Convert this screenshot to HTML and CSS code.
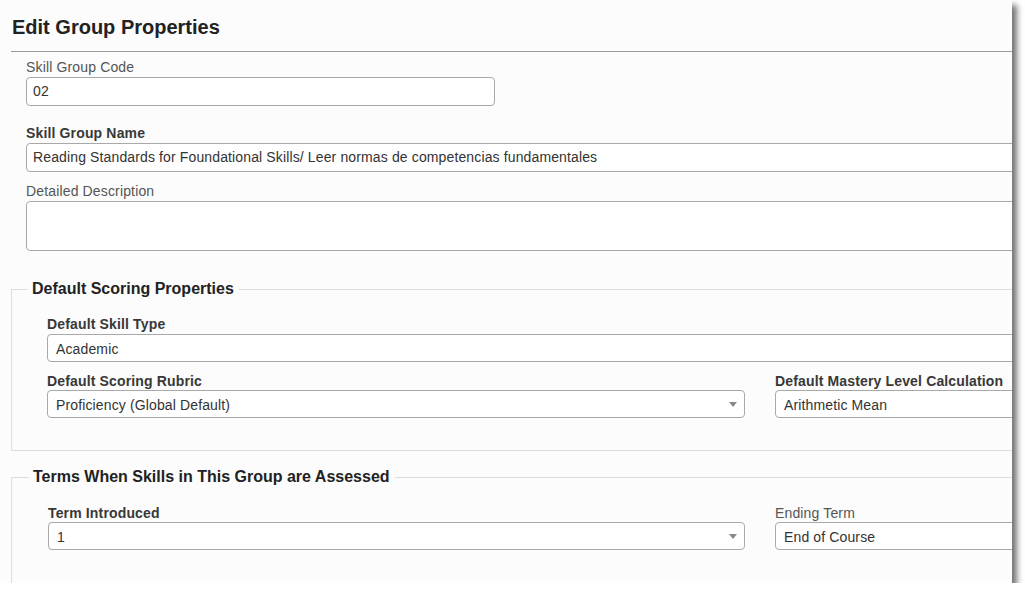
FILE: index.html
```html
<!DOCTYPE html>
<html>
<head>
<meta charset="utf-8">
<link rel="stylesheet" href="styles.css">
</head>
<body>
<div class="panel">
  <div class="sheet">
    <h1 class="title">Edit Group Properties</h1>
    <div class="rule"></div>
    <div class="top-fields">
      <div class="label first">Skill Group Code</div>
      <div class="field code">02</div>
      <div class="label bold second">Skill Group Name</div>
      <div class="field">Reading Standards for Foundational Skills/ Leer normas de competencias fundamentales</div>
      <div class="label third">Detailed Description</div>
      <div class="field area"></div>
    </div>
    <fieldset class="group scoring">
      <legend class="legend">Default Scoring Properties</legend>
      <div class="group-body">
        <div class="label bold">Default Skill Type</div>
        <div class="field in">Academic</div>
        <div class="cols">
          <div class="col">
            <div class="label bold">Default Scoring Rubric</div>
            <div class="field in select"><span>Proficiency (Global Default)</span><span class="caret"></span></div>
          </div>
          <div class="col">
            <div class="label bold">Default Mastery Level Calculation</div>
            <div class="field in">Arithmetic Mean</div>
          </div>
        </div>
      </div>
    </fieldset>
    <fieldset class="group terms">
      <legend class="legend l2">Terms When Skills in This Group are Assessed</legend>
      <div class="group-body">
        <div class="cols flush">
          <div class="col">
            <div class="label bold">Term Introduced</div>
            <div class="field in select"><span>1</span><span class="caret"></span></div>
          </div>
          <div class="col">
            <div class="label">Ending Term</div>
            <div class="field in">End of Course</div>
          </div>
        </div>
      </div>
    </fieldset>
  </div>
</div>
</body>
</html>
```
FILE: styles.css
```css
html, body {
  margin: 0;
  padding: 0;
  background: #ffffff;
}
body {
  font-family: "Liberation Sans", Arial, sans-serif;
  font-size: 14px;
  color: #333;
}
.panel {
  width: 1012px;
  height: 583px;
  overflow: hidden;
  background: #fbfcfb;
  box-shadow: 5px 5px 6px rgba(0, 0, 0, 0.55);
}
.sheet {
  width: 1600px;
}
.title {
  margin: 0;
  padding: 15px 0 0 12px;
  font-size: 20px;
  line-height: 24px;
  font-weight: bold;
  color: #222;
}
.rule {
  margin: 12px 0 0 11px;
  border-top: 1px solid #9c9c9c;
  width: 1200px;
}
.top-fields {
  padding-left: 26px;
  display: flex;
  flex-direction: column;
  align-items: flex-start;
}
.label {
  font-size: 14px;
  line-height: 20px;
  color: #555;
  letter-spacing: 0.15px;
}
.label.bold {
  font-weight: bold;
  color: #383838;
}
.label.first { margin-top: 5px; }
.label.second { margin-top: 17px; }
.label.third { margin-top: 9px; }
.field {
  box-sizing: border-box;
  height: 29px;
  width: 1400px;
  border: 1px solid #a9a9a9;
  border-radius: 4px;
  background: #fff;
  padding: 0 6px;
  font-size: 14px;
  line-height: 27px;
  color: #333;
  white-space: nowrap;
  letter-spacing: 0.13px;
}
.field.code { width: 469px; }
.field.area { height: 50px; }
.field.in {
  padding: 2px 8px 0 8px;
  height: 28px;
  line-height: 24px;
}
.col .field { width: 100%; }
.select {
  display: flex;
  align-items: center;
  justify-content: space-between;
}
.caret {
  width: 0;
  height: 0;
  border-left: 4px solid transparent;
  border-right: 4px solid transparent;
  border-top: 5px solid #888;
  margin-right: -1px;
  margin-top: -2px;
}
.group {
  margin: 0 0 0 11px;
  padding: 0;
  border: 1px solid #dedede;
  min-width: 0;
  width: 1500px;
  box-sizing: border-box;
}
.scoring { margin-top: 28px; }
.terms { margin-top: 16px; }
.legend {
  margin-left: 16px;
  padding: 0 5px 0 4px;
  font-size: 16px;
  line-height: 20px;
  font-weight: bold;
  color: #222;
}
.legend.l2 { margin-left: 17px; }
.group-body {
  padding: 15px 0 32px 35px;
}
.terms .group-body { padding: 17px 0 60px 36px; }
.cols {
  display: grid;
  grid-template-columns: 698px 698px;
  column-gap: 30px;
  margin-top: 10px;
}
.cols.flush { margin-top: 0; }
.terms .cols { grid-template-columns: 697px 698px; column-gap: 30px; }
.col .label { line-height: 18px; }
```
